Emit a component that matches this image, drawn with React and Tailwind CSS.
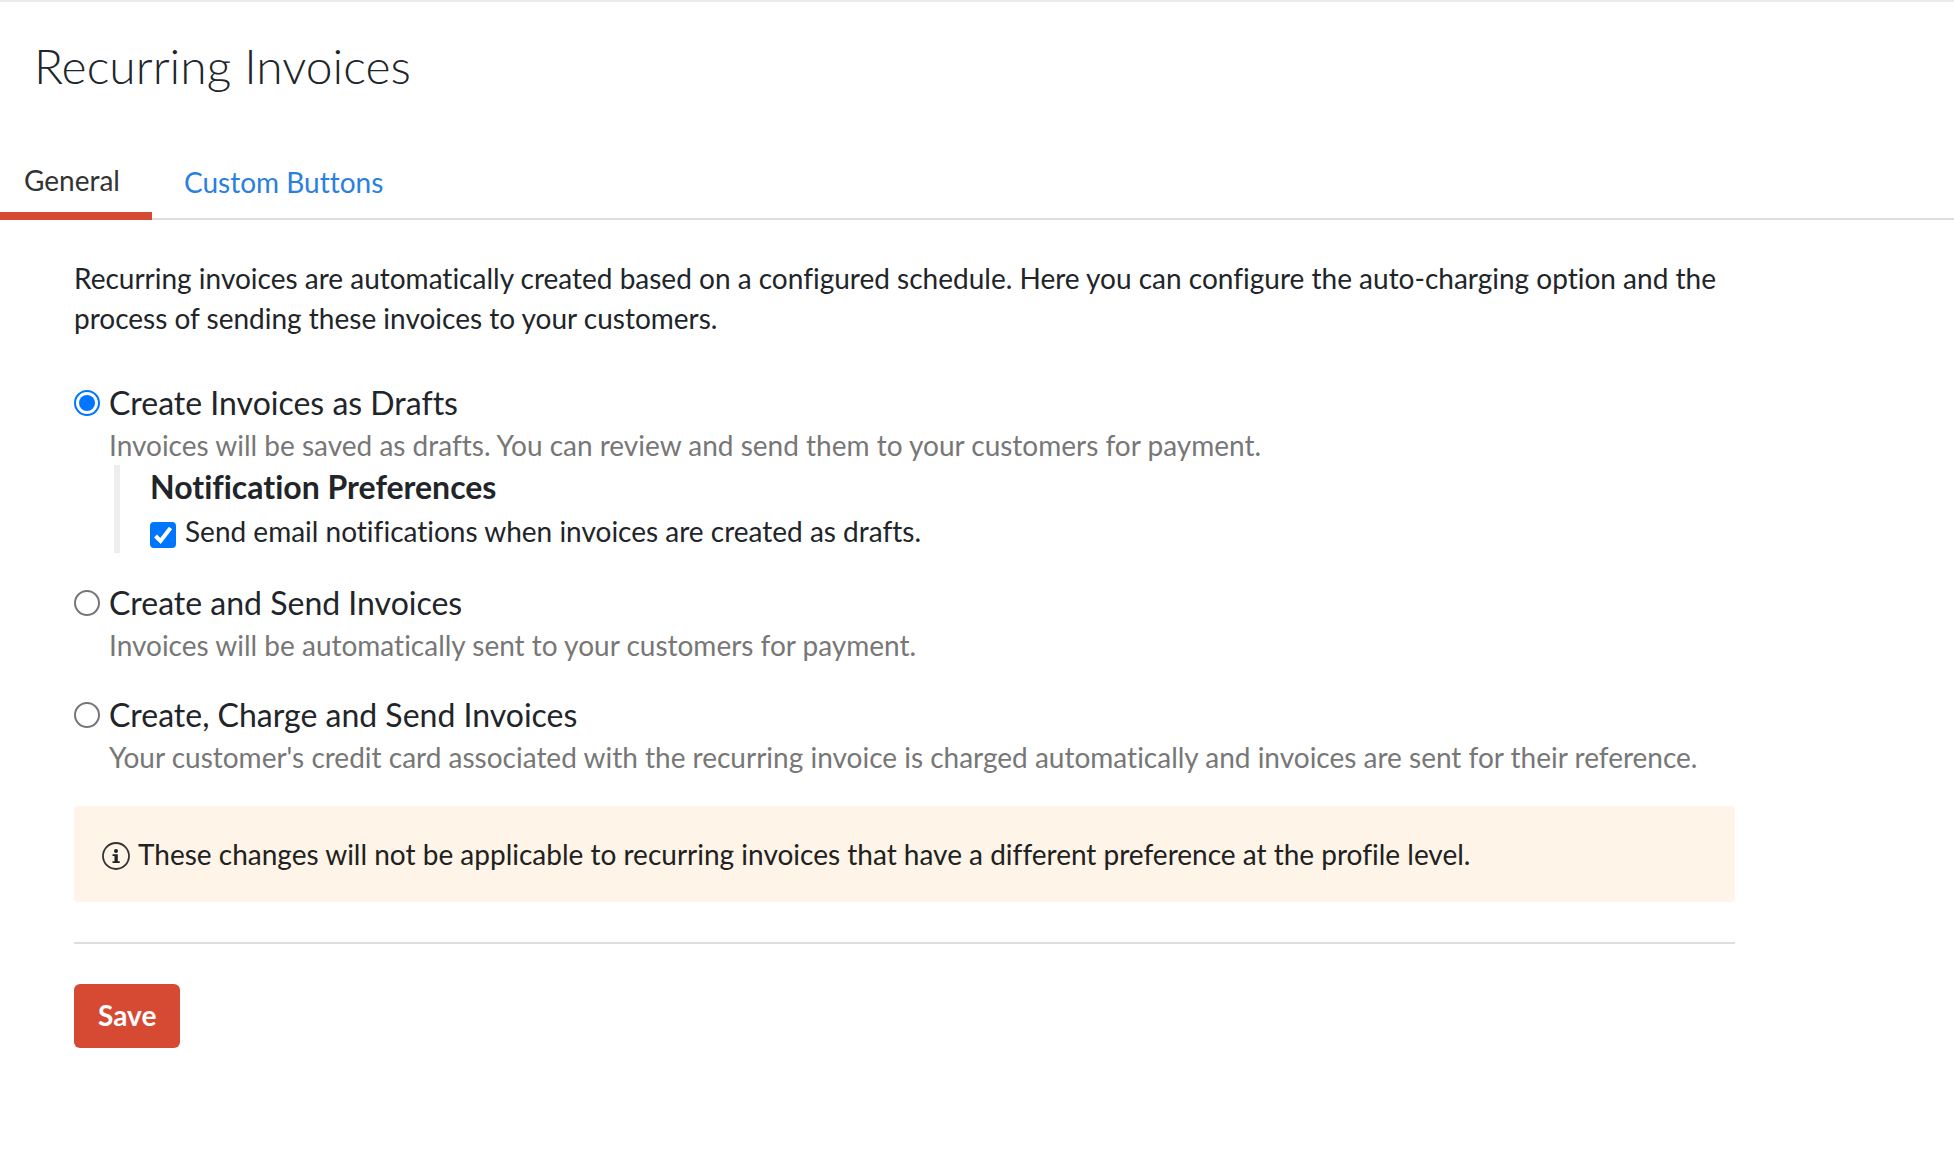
import React, { useState } from 'react';

const OPTIONS = [
  {
    id: 'drafts',
    title: 'Create Invoices as Drafts',
    description: 'Invoices will be saved as drafts. You can review and send them to your customers for payment.',
  },
  {
    id: 'send',
    title: 'Create and Send Invoices',
    description: 'Invoices will be automatically sent to your customers for payment.',
  },
  {
    id: 'charge',
    title: 'Create, Charge and Send Invoices',
    description:
      "Your customer's credit card associated with the recurring invoice is charged automatically and invoices are sent for their reference.",
  },
];

const InfoIcon = () => (
  <svg viewBox="0 0 28 28" className="w-7 h-7 shrink-0 mt-2" fill="none" aria-hidden="true">
    <circle cx="14" cy="14" r="13" stroke="#333" strokeWidth="1.8" />
    <circle cx="14" cy="9" r="2" fill="#222" />
    <path d="M10.5 12.3H15.8V19.3H17.8V21H10.5V19.3H12.5V14H10.5Z" fill="#222" />
  </svg>
);

const NotificationPreferences = ({ checked, onChange }) => (
  <div className="ml-10 h-22 border-l-6 border-[#eee] pl-[30px]">
    <h2 className="text-[32px] leading-[44px] font-bold">Notification Preferences</h2>
    <div className="flex items-center gap-[9px] h-11">
      <span className="relative flex w-[26px] h-[26px] mt-2">
        <input
          id="notify"
          type="checkbox"
          checked={checked}
          onChange={(e) => onChange(e.target.checked)}
          className="appearance-none w-[26px] h-[26px] rounded border-2 border-[#767676] checked:border-[#0075ff] checked:bg-[#0075ff]"
        />
        {checked && (
          <svg viewBox="0 0 26 26" className="absolute inset-0 pointer-events-none" fill="none">
            <path d="M5.5 14L10.5 19L20.5 6" stroke="#fff" strokeWidth="4" />
          </svg>
        )}
      </span>
      <label htmlFor="notify">Send email notifications when invoices are created as drafts.</label>
    </div>
  </div>
);

const App = () => {
  const [selected, setSelected] = useState('drafts');
  const [notify, setNotify] = useState(true);

  return (
    <div className="min-h-screen bg-white border-t-2 border-[#ebebeb] font-['Lato','Noto_Sans',sans-serif] text-[28px] leading-10 text-[#212529] [font-variant-ligatures:none]">
      <header className="px-[34px] pt-[30px] pb-[50px]">
        <h1 className="text-[48px] leading-[68px] font-light">Recurring Invoices</h1>
      </header>

      <nav className="flex items-stretch h-[70px] border-b-2 border-[#ddd]">
        <a href="#general" className="w-[152px] h-[70px] pl-6 pt-2.5 border-b-8 border-[#d64933] text-[#333]">
          General
        </a>
        <a href="#custom-buttons" className="ml-8 pt-3 text-[#2a7fe0]">
          Custom Buttons
        </a>
      </nav>

      <main className="ml-[74px] w-[85%] pt-[38px]">
        <p>
          Recurring invoices are automatically created based on a configured schedule. Here you can configure the
          auto-charging option and the process of sending these invoices to your customers.
        </p>

        <form onSubmit={(e) => e.preventDefault()}>
          <div className="pt-[43px] space-y-7">
            {OPTIONS.map((option) => (
              <div key={option.id}>
                <div className="flex items-center gap-[9px] h-11">
                  <input
                    id={option.id}
                    type="radio"
                    name="preference"
                    checked={selected === option.id}
                    onChange={() => setSelected(option.id)}
                    className="appearance-none w-[26px] h-[26px] rounded-full border-2 border-[#767676] p-[3px] bg-clip-content checked:border-[#0075ff] checked:bg-[#0075ff]"
                  />
                  <label htmlFor={option.id} className="text-[32px]">
                    {option.title}
                  </label>
                </div>
                <p className="pl-[35px] text-[#777]">{option.description}</p>
                {option.id === 'drafts' && <NotificationPreferences checked={notify} onChange={setNotify} />}
              </div>
            ))}
          </div>

          <div className="mt-[29px] flex gap-2 rounded bg-[#fef4e7] p-7 text-[#212121]">
            <InfoIcon />
            <p>These changes will not be applicable to recurring invoices that have a different preference at the profile level.</p>
          </div>

          <hr className="mt-10 border-t-2 border-[#ddd]" />

          <button type="submit" className="mt-10 h-16 rounded-md bg-[#d64933] px-6 pb-0.5 font-bold text-white">
            Save
          </button>
        </form>
      </main>
    </div>
  );
};

export default App;
